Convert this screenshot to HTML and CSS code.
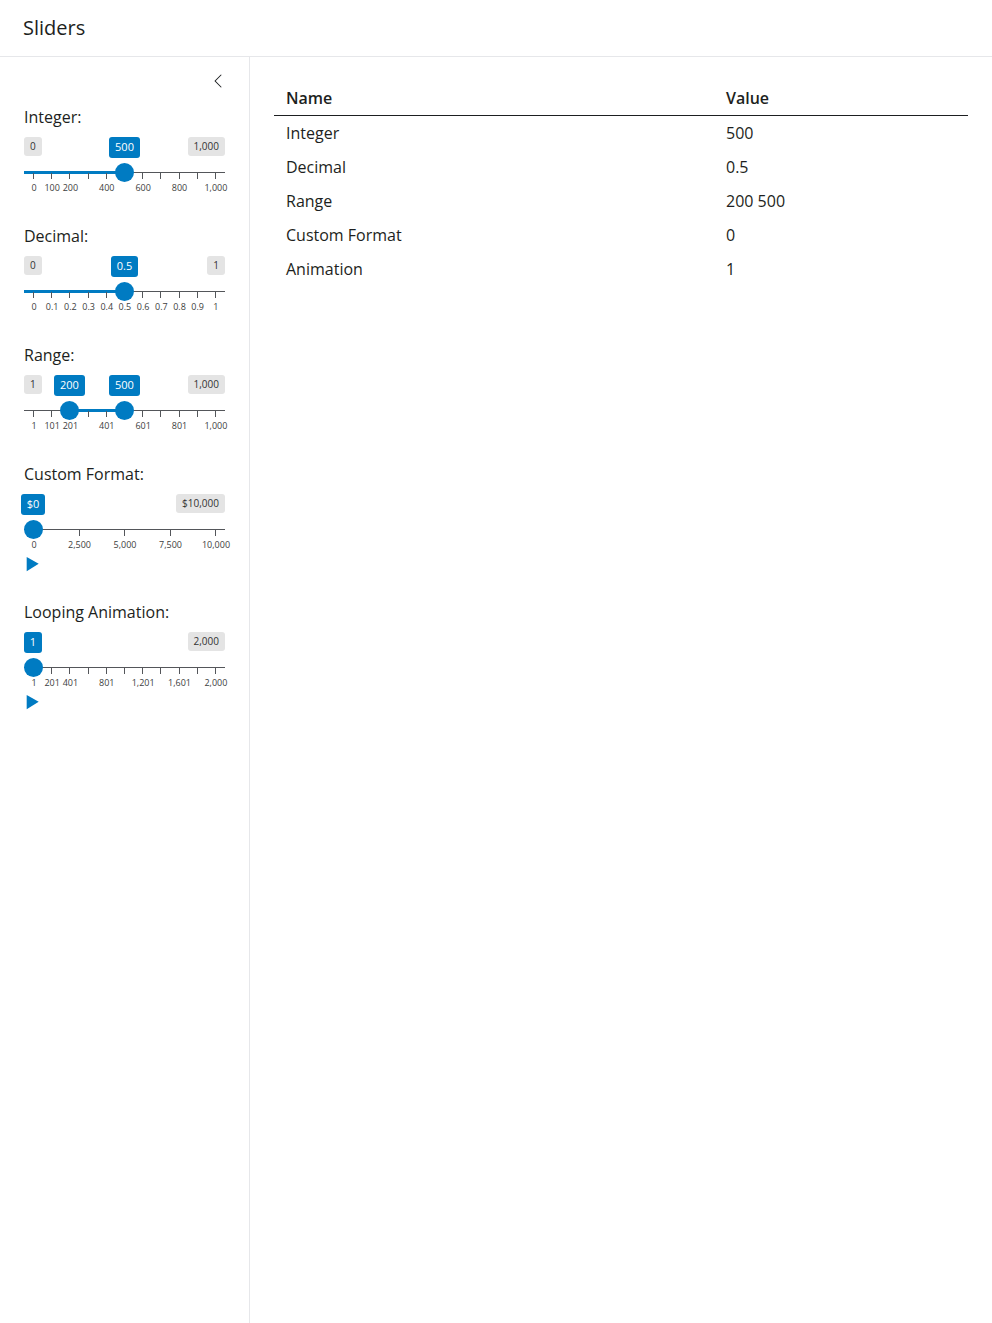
FILE: index.html
```html
<!DOCTYPE html>
<html lang="en">
<head>
<meta charset="utf-8">
<meta name="viewport" content="width=device-width, initial-scale=1">
<title>Sliders</title>
<link rel="stylesheet" href="styles.css">
</head>
<body>
<header class="page-header"><h1 class="page-title">Sliders</h1></header>
<div class="layout">
  <aside class="sidebar">
    <div class="sidebar-top">
      <button class="collapse" type="button" aria-label="Toggle sidebar">
        <svg width="16" height="16" viewBox="0 0 16 16" fill="currentColor" aria-hidden="true"><path d="M11.354 1.646a.5.5 0 0 1 0 .708L5.707 8l5.647 5.646a.5.5 0 0 1-.708.708l-6-6a.5.5 0 0 1 0-.708l6-6a.5.5 0 0 1 .708 0z"/></svg>
      </button>
    </div>
    <form class="controls">
      <div class="slider">
        <label class="slider-label" for="integer">Integer:</label>
        <div class="badges">
          <span class="limit">0</span><span class="limit">1,000</span>
          <div class="anchor" style="--at:0.5"><output class="value" for="integer">500</output></div>
        </div>
        <div class="track" style="--from:0;--to:0.5">
          <div class="line"></div><div class="fill"></div>
          <div class="scale"><span class="tick">0</span><span class="tick">100</span><span class="tick">200</span><span class="tick"></span><span class="tick">400</span><span class="tick"></span><span class="tick">600</span><span class="tick"></span><span class="tick">800</span><span class="tick"></span><span class="tick">1,000</span></div>
          <input class="range" id="integer" type="range" min="0" max="1000" value="500">
        </div>
      </div>

      <div class="slider">
        <label class="slider-label" for="decimal">Decimal:</label>
        <div class="badges">
          <span class="limit">0</span><span class="limit">1</span>
          <div class="anchor" style="--at:0.5"><output class="value" for="decimal">0.5</output></div>
        </div>
        <div class="track" style="--from:0;--to:0.5">
          <div class="line"></div><div class="fill"></div>
          <div class="scale"><span class="tick">0</span><span class="tick">0.1</span><span class="tick">0.2</span><span class="tick">0.3</span><span class="tick">0.4</span><span class="tick">0.5</span><span class="tick">0.6</span><span class="tick">0.7</span><span class="tick">0.8</span><span class="tick">0.9</span><span class="tick">1</span></div>
          <input class="range" id="decimal" type="range" min="0" max="1" step="0.1" value="0.5">
        </div>
      </div>

      <div class="slider">
        <label class="slider-label" for="range-from">Range:</label>
        <div class="badges">
          <span class="limit">1</span><span class="limit">1,000</span>
          <div class="anchor" style="--at:0.199"><output class="value" for="range-from">200</output></div>
          <div class="anchor" style="--at:0.4995"><output class="value" for="range-to">500</output></div>
        </div>
        <div class="track" style="--from:0.199;--to:0.4995">
          <div class="line"></div><div class="fill"></div>
          <div class="scale"><span class="tick">1</span><span class="tick">101</span><span class="tick">201</span><span class="tick"></span><span class="tick">401</span><span class="tick"></span><span class="tick">601</span><span class="tick"></span><span class="tick">801</span><span class="tick"></span><span class="tick">1,000</span></div>
          <input class="range" id="range-from" type="range" min="1" max="1000" value="200">
          <input class="range" id="range-to" type="range" min="1" max="1000" value="500" aria-label="Range end">
        </div>
      </div>

      <div class="slider">
        <label class="slider-label" for="format">Custom Format:</label>
        <div class="badges">
          <span></span><span class="limit">$10,000</span>
          <div class="anchor" style="--at:0"><output class="value" for="format">$0</output></div>
        </div>
        <div class="track" style="--from:0;--to:0">
          <div class="line"></div>
          <div class="scale"><span class="tick">0</span><span class="tick">2,500</span><span class="tick">5,000</span><span class="tick">7,500</span><span class="tick">10,000</span></div>
          <input class="range" id="format" type="range" min="0" max="10000" step="2500" value="0">
        </div>
        <button class="play" type="button" aria-label="Play custom format"><svg width="16" height="15" viewBox="0 0 16 15" aria-hidden="true"><path d="M2.700 0v14.300L14.700 6.700z" fill="currentColor"/></svg></button>
      </div>

      <div class="slider">
        <label class="slider-label" for="animation">Looping Animation:</label>
        <div class="badges">
          <span></span><span class="limit">2,000</span>
          <div class="anchor" style="--at:0"><output class="value" for="animation">1</output></div>
        </div>
        <div class="track" style="--from:0;--to:0">
          <div class="line"></div>
          <div class="scale"><span class="tick">1</span><span class="tick">201</span><span class="tick">401</span><span class="tick"></span><span class="tick">801</span><span class="tick"></span><span class="tick">1,201</span><span class="tick"></span><span class="tick">1,601</span><span class="tick"></span><span class="tick">2,000</span></div>
          <input class="range" id="animation" type="range" min="1" max="2000" step="10" value="1">
        </div>
        <button class="play" type="button" aria-label="Play looping animation"><svg width="16" height="15" viewBox="0 0 16 15" aria-hidden="true"><path d="M2.700 0v14.300L14.700 6.700z" fill="currentColor"/></svg></button>
      </div>
    </form>
  </aside>
  <main class="main">
    <table class="values">
      <thead><tr><th class="name" scope="col">Name</th><th scope="col">Value</th></tr></thead>
      <tbody>
        <tr><td>Integer</td><td>500</td></tr>
        <tr><td>Decimal</td><td>0.5</td></tr>
        <tr><td>Range</td><td>200 500</td></tr>
        <tr><td>Custom Format</td><td>0</td></tr>
        <tr><td>Animation</td><td>1</td></tr>
      </tbody>
    </table>
  </main>
</div>
</body>
</html>
```
FILE: styles.css
```css
* { box-sizing: border-box; }

body {
  --blue: #007bc2;
  --ink: #1d1f21;
  --rule: #e6e7ea;
  margin: 0;
  min-height: 100vh;
  display: flex;
  flex-direction: column;
  font: 16px/24px "Open Sans", sans-serif;
  color: var(--ink);
  background: #fff;
}

button {
  display: flex;
  padding: 0;
  border: 0;
  background: none;
  cursor: pointer;
}

.page-header {
  padding: 16px 23px;
  border-bottom: 1px solid var(--rule);
}

.page-title {
  margin: 0;
  font-size: 20px;
  font-weight: 400;
  line-height: 24px;
}

.layout {
  flex: 1;
  display: grid;
  grid-template-columns: 250px 1fr;
}

.sidebar { border-right: 1px solid var(--rule); }

.sidebar-top {
  display: flex;
  justify-content: flex-end;
  padding-right: 16px;
}

.collapse {
  width: 30px;
  height: 48px;
  align-items: center;
  justify-content: center;
  color: var(--ink);
}

.controls {
  display: flex;
  flex-direction: column;
  gap: 24px;
  padding: 0 24px 24px;
}

.slider-label {
  display: block;
  margin-bottom: 8px;
}

.badges {
  position: relative;
  display: flex;
  justify-content: space-between;
  align-items: flex-start;
  height: 26px;
}

.limit,
.value {
  padding: 0 6px;
  border-radius: 3px;
  white-space: nowrap;
}

.limit {
  font-size: 10px;
  line-height: 19px;
  color: #333;
  background: #e4e4e4;
}

/* Zero-width point on the track that the value bubble is centred on */
.anchor {
  position: absolute;
  top: 0;
  left: calc(9px + (100% - 18px) * var(--at));
  width: 0;
  display: flex;
  justify-content: center;
}

.value {
  padding-bottom: 2px;
  font-size: 11px;
  line-height: 19px;
  color: #fff;
  background: var(--blue);
}

.track {
  display: grid;
  grid-template-columns: 100%;
  height: 37px;
}

.track > * { grid-area: 1 / 1; }

.line {
  height: 1px;
  margin-top: 9px;
  background: #54565a;
}

.fill {
  height: 3px;
  margin-top: 8px;
  margin-left: calc((100% - 10px) * var(--from));
  width: calc(100% * (var(--to) - var(--from)));
  background: var(--blue);
}

.scale {
  display: flex;
  justify-content: space-between;
  padding: 10px 9px 0;
}

.tick {
  width: 1px;
  display: flex;
  flex-direction: column;
  align-items: center;
  font-size: 9px;
  line-height: 12px;
  text-indent: 1px;
  color: #3c3e40;
  white-space: nowrap;
}

.tick::before {
  content: "";
  width: 1px;
  height: 6px;
  margin-bottom: 3px;
  background: #54565a;
}

.range {
  appearance: none;
  z-index: 1;
  width: 100%;
  height: 19px;
  margin: 0;
  background: none;
  pointer-events: none;
}

.range::-webkit-slider-thumb {
  appearance: none;
  width: 19px;
  height: 19px;
  border: 0;
  border-radius: 50%;
  background: var(--blue);
  pointer-events: auto;
  cursor: pointer;
}

.range::-moz-range-thumb {
  width: 19px;
  height: 19px;
  border: 0;
  border-radius: 50%;
  background: var(--blue);
  pointer-events: auto;
}

.play {
  height: 19px;
  align-items: flex-start;
  color: var(--blue);
}

.main { padding: 24px; }

.values {
  width: 100%;
  border-spacing: 0;
}

.values th,
.values td {
  padding: 5px 12px;
  text-align: left;
}

.values th {
  font-weight: 600;
  border-bottom: 1px solid var(--ink);
}

.values .name { width: 63.4%; }
```
